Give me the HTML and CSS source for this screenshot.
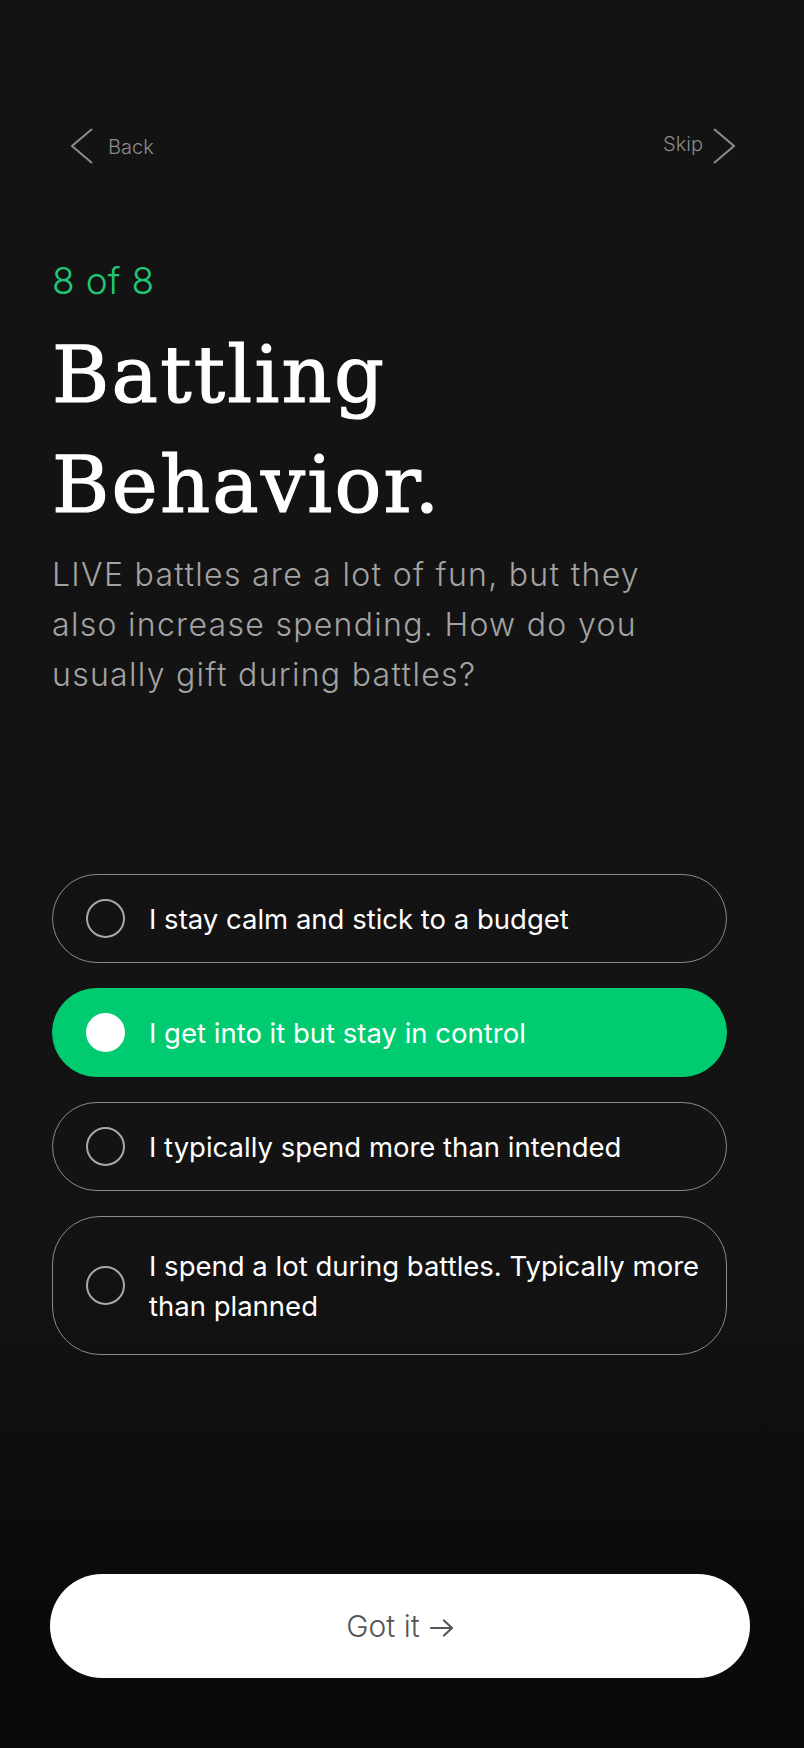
FILE: index.html
```html
<!DOCTYPE html>
<html lang="en">
<head>
<meta charset="utf-8">
<title>Battling Behavior</title>
<link rel="stylesheet" href="styles.css">
</head>
<body>
<div class="screen">
  <nav class="topnav">
    <a class="nav-link back">
      <svg class="chev" width="24" height="36" viewBox="0 0 24 36"><polyline points="22,1 2,18 22,35" fill="none" stroke="#8c8c8c" stroke-width="2"/></svg>
      <span>Back</span>
    </a>
    <a class="nav-link skip">
      <span>Skip</span>
      <svg class="chev" width="22" height="36" viewBox="0 0 22 36"><polyline points="1,1 21,18 1,35" fill="none" stroke="#8c8c8c" stroke-width="2"/></svg>
    </a>
  </nav>

  <section class="intro">
    <div class="step">8 of 8</div>
    <h1 class="title">Battling<br>Behavior.</h1>
    <p class="lead">LIVE battles are a lot of fun, but they<br>also increase spending. How do you<br>usually gift during battles?</p>
  </section>

  <ul class="options">
    <li class="option"><span class="radio"></span><span class="label">I stay calm and stick to a budget</span></li>
    <li class="option selected"><span class="radio"></span><span class="label">I get into it but stay in control</span></li>
    <li class="option"><span class="radio"></span><span class="label">I typically spend more than intended</span></li>
    <li class="option tall"><span class="radio"></span><span class="label">I spend a lot during battles. Typically more than planned</span></li>
  </ul>

  <div class="footer">
    <button class="cta"><span>Got it</span><svg class="arrow" width="24" height="18" viewBox="0 0 24 18"><path d="M1 9 H22 M14 1.5 L22 9 L14 16.5" fill="none" stroke="#555" stroke-width="2.2" stroke-linecap="round" stroke-linejoin="round"/></svg></button>
  </div>
</div>
</body>
</html>
```

FILE: styles.css
```css
* { box-sizing: border-box; }
html, body { margin: 0; padding: 0; }
body {
  background: linear-gradient(to bottom, #131313 0%, #131313 72%, #0a0a0a 92%, #0a0a0a 100%);
  min-height: 1748px;
  font-family: Inter, Roboto, "Liberation Sans", sans-serif;
  color: #fff;
}
.screen {
  width: 804px;
  min-height: 1748px;
  display: flex;
  flex-direction: column;
}
.topnav {
  margin-top: 128px;
  padding: 0 69px 0 72px;
  height: 36px;
  display: flex;
  justify-content: space-between;
  align-items: center;
}
.nav-link {
  display: flex;
  align-items: center;
  color: #8c8c8c;
  font-size: 20px;
  font-weight: 300;
  line-height: 24px;
}
.back .chev { margin-right: 14px; margin-left: -2px; }
.back span { margin-top: 2px; }
.skip span { margin-top: -4px; margin-right: 10px; }
.intro {
  padding: 0 52px;
  margin-top: 95px;
}
.step {
  color: #1fc877;
  font-size: 37px;
  line-height: 44px;
  font-weight: 300;
  height: 44px;
  letter-spacing: 0.3px;
}
.title {
  margin: 17px 0 0;
  font-family: "DejaVu Serif", "Liberation Serif", serif;
  font-weight: 400;
  font-size: 78px;
  line-height: 110px;
  letter-spacing: 2.2px;
  -webkit-text-stroke: 1.2px #fff;
  color: #fff;
}
.lead {
  margin: 10px 0 0;
  font-size: 32px;
  line-height: 50px;
  font-weight: 300;
  color: #a3a3a3;
  letter-spacing: 1.3px;
  width: 675px;
}
.options {
  list-style: none;
  margin: 174px 0 0 52px;
  padding: 0;
  width: 675px;
  display: flex;
  flex-direction: column;
  gap: 25px;
}
.option {
  display: flex;
  align-items: center;
  border: 1px solid #8a8a8a;
  border-radius: 48px;
  padding: 23.5px 22px 23.5px 33px;
  font-size: 27.5px;
  line-height: 40px;
  color: #fff;
}
.option.tall {
  padding-top: 28.5px;
  padding-bottom: 28.5px;
}
.option.selected {
  background: #00cb70;
  border-color: #00cb70;
}
.radio {
  flex: none;
  width: 39px;
  height: 39px;
  border-radius: 50%;
  border: 2.5px solid #a8a8a8;
  margin-right: 24px;
}
.selected .radio {
  background: #fff;
  border-color: #fff;
}
.label { display: block; }
.footer {
  margin-top: auto;
  padding: 0 54px 70px 50px;
}
.cta {
  width: 700px;
  height: 104px;
  border: none;
  border-radius: 52px;
  background: #fff;
  color: #555;
  font-family: Inter, Roboto, sans-serif;
  font-size: 30px;
  font-weight: 300;
  display: flex;
  align-items: center;
  justify-content: center;
  gap: 10px;
  cursor: pointer;
}
.cta .arrow { margin-top: 3px; }
```
